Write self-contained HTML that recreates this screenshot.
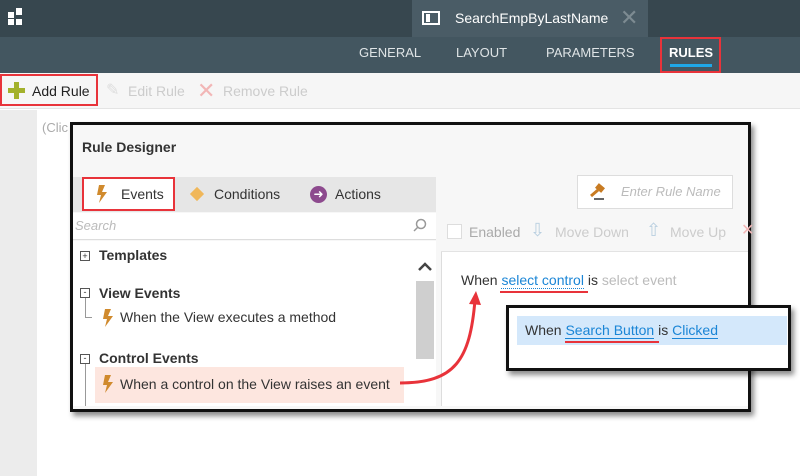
<!DOCTYPE html>
<html><head><style>
*{margin:0;padding:0;box-sizing:border-box}
body{width:800px;height:476px;overflow:hidden;background:#fff;font-family:"Liberation Sans",sans-serif;position:relative;font-size:13px;color:#333}
.a{position:absolute}
.red{border:2px solid #e8333a}
</style></head><body>
<div class="a" style="left:0;top:0;width:800px;height:37px;background:#37474f"></div>
<div class="a" style="left:412px;top:0;width:236px;height:37px;background:#4a5c66"></div>
<div class="a" style="left:0;top:37px;width:800px;height:36px;background:#435660"></div>
<div class="a" style="left:8px;top:12px;width:6px;height:6px;background:#fff"></div>
<div class="a" style="left:16px;top:8px;width:6px;height:7px;background:#fff"></div>
<div class="a" style="left:8px;top:19px;width:6px;height:6px;background:#fff"></div>
<div class="a" style="left:16px;top:19px;width:6px;height:6px;background:#fff"></div>
<div class="a" style="left:422px;top:11px;width:18px;height:14px;border:2px solid #fff"></div>
<div class="a" style="left:426px;top:14px;width:4px;height:8px;background:#fff"></div>
<div class="a" style="left:455px;top:10px;color:#fff;font-size:14px">SearchEmpByLastName</div>
<div class="a" style="left:620px;top:5px;color:#7d8b92;font-size:22px">✕</div>
<div class="a" style="left:359px;top:45px;color:#dfe4e6;font-size:13px">GENERAL</div>
<div class="a" style="left:456px;top:45px;color:#dfe4e6;font-size:13px">LAYOUT</div>
<div class="a" style="left:546px;top:45px;color:#dfe4e6;font-size:13px">PARAMETERS</div>
<div class="a" style="left:669px;top:45px;color:#fff;font-size:13px;font-weight:bold">RULES</div>
<div class="a" style="left:670px;top:64px;width:42px;height:3px;background:#1fa7e8"></div>
<div class="a red" style="left:660px;top:37px;width:61px;height:36px"></div>
<div class="a" style="left:0;top:73px;width:800px;height:36px;background:#f6f6f6;border-bottom:1px solid #e4e4e4"></div>
<div class="a red" style="left:0;top:74px;width:98px;height:32px"></div>
<div class="a" style="left:14px;top:82px;width:5px;height:17px;background:#a3b12c"></div>
<div class="a" style="left:8px;top:88px;width:17px;height:5px;background:#a3b12c"></div>
<div class="a" style="left:32px;top:83px;font-size:14px;color:#222">Add Rule</div>
<div class="a" style="left:106px;top:80px;font-size:16px;color:#ddd">✎</div>
<div class="a" style="left:128px;top:83px;font-size:14px;color:#ccc">Edit Rule</div>
<div class="a" style="left:197px;top:78px;font-size:22px;color:#f2b6b6">✕</div>
<div class="a" style="left:223px;top:83px;font-size:14px;color:#ccc">Remove Rule</div>
<div class="a" style="left:0;top:110px;width:37px;height:366px;background:#ececec"></div>
<div class="a" style="left:42px;top:120px;color:#aaa">(Clic</div>
<div class="a" style="left:70px;top:122px;width:681px;height:290px;background:#f7f7f7;border:3px solid #111;box-shadow:3px 4px 5px rgba(0,0,0,.45)"></div>
<div class="a" style="left:82px;top:139px;font-weight:bold;font-size:14px;color:#333">Rule Designer</div>
<div class="a" style="left:73px;top:177px;width:363px;height:35px;background:#e6e6e6"></div>
<div class="a red" style="left:82px;top:177px;width:93px;height:34px;background:#fff"></div>
<svg class="a" style="left:96px;top:185px" width="12" height="18"><path d="M3 0h6l-3 7h5l-8 11 2-8H1z" fill="#d08a2d"/></svg>
<div class="a" style="left:121px;top:186px;font-size:14px">Events</div>
<div class="a" style="left:192px;top:189px;width:10px;height:10px;background:#f0b75a;transform:rotate(45deg)"></div>
<div class="a" style="left:214px;top:186px;font-size:14px">Conditions</div>
<div class="a" style="left:310px;top:186px;width:17px;height:17px;border-radius:50%;background:#8d4a8e;color:#fff;font-size:12px;text-align:center;line-height:17px">➜</div>
<div class="a" style="left:335px;top:186px;font-size:14px">Actions</div>
<div class="a" style="left:73px;top:213px;width:363px;height:27px;background:#fff;border-bottom:1px solid #ddd"></div>
<div class="a" style="left:75px;top:218px;font-style:italic;color:#bbb;font-size:13px">Search</div>
<svg class="a" style="left:413px;top:218px" width="14" height="14"><circle cx="8" cy="6" r="4.5" stroke="#999" stroke-width="1.5" fill="none"/><path d="M5 9L1 13" stroke="#999" stroke-width="1.5"/></svg>
<div class="a" style="left:73px;top:241px;width:363px;height:165px;background:#fff"></div>
<div class="a" style="left:416px;top:281px;width:18px;height:78px;background:#cfcfcf"></div>
<svg class="a" style="left:418px;top:262px" width="14" height="10"><path d="M1 8L7 2L13 8" stroke="#444" stroke-width="2.5" fill="none"/></svg>
<div class="a" style="left:80px;top:251px;width:10px;height:10px;border:1px solid #555;font-size:9px;line-height:8px;text-align:center">+</div>
<div class="a" style="left:99px;top:247px;font-weight:bold;font-size:14px">Templates</div>
<div class="a" style="left:80px;top:288px;width:10px;height:10px;border:1px solid #555;font-size:9px;line-height:6px;text-align:center">-</div>
<div class="a" style="left:85px;top:298px;width:7px;height:20px;border-left:1px solid #999;border-bottom:1px solid #999"></div>
<div class="a" style="left:99px;top:285px;font-weight:bold;font-size:14px">View Events</div>
<svg class="a" style="left:102px;top:309px" width="12" height="18"><path d="M3 0h6l-3 7h5l-8 11 2-8H1z" fill="#d08a2d"/></svg>
<div class="a" style="left:120px;top:309px;font-size:14px">When the View executes a method</div>
<div class="a" style="left:80px;top:354px;width:10px;height:10px;border:1px solid #555;font-size:9px;line-height:6px;text-align:center">-</div>
<div class="a" style="left:85px;top:364px;width:7px;height:42px;border-left:1px solid #999"></div>
<div class="a" style="left:99px;top:350px;font-weight:bold;font-size:14px">Control Events</div>
<div class="a" style="left:95px;top:367px;width:309px;height:36px;background:#fde6df"></div>
<svg class="a" style="left:102px;top:375px" width="12" height="18"><path d="M3 0h6l-3 7h5l-8 11 2-8H1z" fill="#d08a2d"/></svg>
<div class="a" style="left:120px;top:376px;font-size:14px">When a control on the View raises an event</div>
<div class="a" style="left:577px;top:175px;width:156px;height:34px;background:#fff;border:1px solid #ddd"></div>
<svg class="a" style="left:588px;top:182px" width="20" height="20"><path d="M3 14l7-6" stroke="#c87b22" stroke-width="3"/><rect x="8" y="3" width="8" height="6" fill="#c87b22" transform="rotate(40 12 6)"/><rect x="6" y="16" width="10" height="2" fill="#666"/></svg>
<div class="a" style="left:621px;top:184px;font-style:italic;color:#bbb;font-size:13px">Enter Rule Name</div>
<div class="a" style="left:441px;top:212px;width:307px;height:194px;background:#fff;border-left:1px solid #ddd"></div>
<div class="a" style="left:441px;top:212px;width:307px;height:40px;background:#f7f7f7;border-bottom:1px solid #e3e3e3"></div>
<div class="a" style="left:447px;top:224px;width:15px;height:15px;border:1px solid #ddd;background:#fff"></div>
<div class="a" style="left:469px;top:224px;color:#aaa;font-size:14px">Enabled</div>
<div class="a" style="left:530px;top:220px;color:#b9cfe0;font-size:18px">⇩</div>
<div class="a" style="left:555px;top:224px;color:#ccc;font-size:14px">Move Down</div>
<div class="a" style="left:646px;top:220px;color:#b9cfe0;font-size:18px">⇧</div>
<div class="a" style="left:670px;top:224px;color:#ccc;font-size:14px">Move Up</div>
<div class="a" style="left:741px;top:220px;color:#f2b6b6;font-size:16px">✕</div>
<div class="a" style="left:461px;top:272px;font-size:14px">When <span style="color:#1a85d6;border-bottom:1px dotted #1a85d6">select control</span> is <span style="color:#bbb">select event</span></div>
<div class="a" style="left:500px;top:291px;width:88px;height:2px;background:#e8333a"></div>
<div class="a" style="left:506px;top:305px;width:285px;height:66px;background:#fff;border:3px solid #111;box-shadow:3px 4px 5px rgba(0,0,0,.45)"></div>
<div class="a" style="left:517px;top:316px;width:270px;height:29px;background:#d4e8fb"></div>
<div class="a" style="left:525px;top:322px;font-size:14px">When <span style="color:#1a85d6;border-bottom:1px solid #1a85d6">Search Button</span> is <span style="color:#1a85d6;border-bottom:1px solid #1a85d6">Clicked</span></div>
<div class="a" style="left:565px;top:341px;width:94px;height:2px;background:#e8333a"></div>
<svg class="a" style="left:0;top:0" width="800" height="476"><path d="M400 383 C455 383 470 360 475 300" stroke="#e8333a" stroke-width="3" fill="none"/><path d="M469 304 L476 291 L481 305Z" fill="#e8333a"/></svg>
</body></html>
